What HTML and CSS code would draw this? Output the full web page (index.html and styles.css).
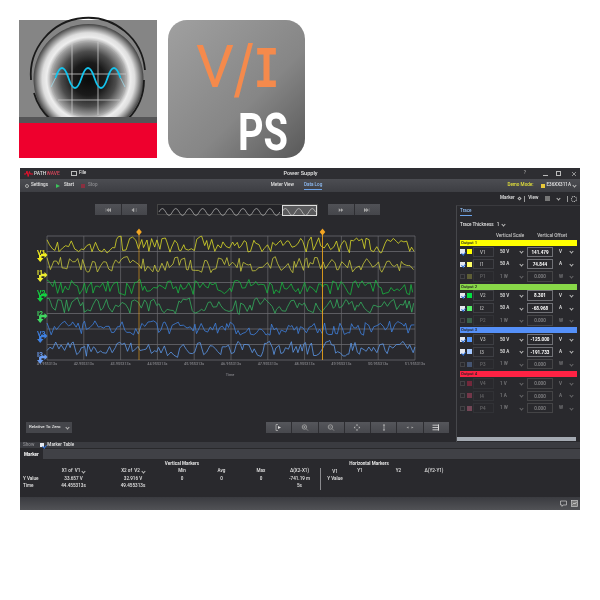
FILE: index.html
```html
<!DOCTYPE html>
<html lang="en">
<head>
    <meta charset="UTF-8">
    <title>PathWave Power Supply</title>
    <link rel="stylesheet" href="styles.css">
</head>
<body>
    <div class="logos">
        <svg class="logo" width="138" height="138" viewBox="19 20 138 138">
            <defs>
                <radialGradient id="lens" gradientUnits="userSpaceOnUse" cx="88.5" cy="79" r="55">
                    <stop offset="0" stop-color="#0a0a0a"/>
                    <stop offset=".3" stop-color="#1a1a1a"/>
                    <stop offset=".5" stop-color="#4c4c4c"/>
                    <stop offset=".66" stop-color="#9a9a9a"/>
                    <stop offset=".76" stop-color="#eeeeee"/>
                    <stop offset=".84" stop-color="#dedede"/>
                    <stop offset=".93" stop-color="#8a8a8a"/>
                    <stop offset="1" stop-color="#444"/>
                </radialGradient>
            </defs>
            <rect x="19" y="20" width="138" height="97" fill="#858585"/>
            <circle cx="88.5" cy="79" r="55" fill="url(#lens)"/>
            <path d="M31 80A57 57 0 0 1 145 70M34 93A57 57 0 0 0 50 119M144 80A56 56 0 0 1 128 119" fill="none" stroke="#1a1a1a" stroke-width="1.8"/>
            <circle cx="88.5" cy="79" r="38" fill="none" stroke="#aaa" stroke-width=".6"/>
            <path d="M72 43V114M98 42V115M52 74H126M58 100H120" stroke="#ccc" stroke-width=".8" fill="none"/>
            <path d="M51 87L55.5 78M120.5 78L125 87" stroke="#9fdcec" stroke-width=".8" fill="none"/>
            <path d="M55.5 78Q62 58 68.5 78T81.5 78T94.5 78T107.5 78T120.5 78" stroke="#14c4ee" stroke-width="1.8" fill="none"/>
            <rect x="19" y="117" width="138" height="6" fill="#555557"/>
            <rect x="19" y="123" width="138" height="35" fill="#ee002d"/>
        </svg>
        <svg class="logo" width="137" height="138" viewBox="168 20 137 138">
            <defs>
                <linearGradient id="tile" x1="0" y1="0" x2="1" y2="1">
                    <stop offset="0" stop-color="#a0a0a0"/>
                    <stop offset=".6" stop-color="#868686"/>
                    <stop offset="1" stop-color="#585858"/>
                </linearGradient>
            </defs>
            <rect x="168" y="20" width="137" height="138" rx="19" fill="url(#tile)"/>
            <text class="logo-vi" x="196" y="87" textLength="38" lengthAdjust="spacingAndGlyphs">V</text>
            <text class="logo-slash" x="234" y="93" textLength="20" lengthAdjust="spacingAndGlyphs">/</text>
            <text class="logo-i" x="254" y="87" textLength="25" lengthAdjust="spacingAndGlyphs">I</text>
            <text class="logo-ps" x="238" y="150" textLength="50" lengthAdjust="spacingAndGlyphs">PS</text>
        </svg>
    </div>

    <div class="app">
        <div class="titlebar">
            <div class="brand">
                <svg width="9" height="7" viewBox="0 0 9 7"><path d="M0 4H2L3 1L4.2 6.5L5.4 1.5L6.2 4H9" fill="none" stroke="#e8102c" stroke-width="1"/></svg>
                <span class="brand-name">PATH<span class="brand-red">WAVE</span></span>
                <span class="folder"></span>
                <span>File</span>
            </div>
            <div class="app-title">Power Supply</div>
            <div class="window-btns">
                <span class="win-help">?</span>
                <span class="win-min"></span>
                <span class="win-max"></span>
                <svg width="6" height="6" viewBox="0 0 6 6"><path d="M1 1L5 5M5 1L1 5" stroke="#bbb" stroke-width=".7"/></svg>
            </div>
        </div>

        <div class="toolbar">
            <div class="actions">
                <span class="gear"></span><span class="act-label">Settings</span>
                <span class="play"></span><span class="act-label">Start</span>
                <span class="stop"></span><span class="act-label dim">Stop</span>
            </div>
            <div class="views">
                <span>Meter View</span>
                <span class="view-on">Data Log</span>
            </div>
            <div class="demo">
                <span class="demo-label">Demo Mode:</span>
                <span class="demo-flag"></span>
                <span>E36XX311A</span>
                <span class="chev"></span>
            </div>
        </div>

        <div class="main">
            <div class="chart-col">
                <div class="nav">
                    <div class="btn-group">
                        <span class="btn"><svg width="6" height="4" viewBox="0 0 8 5"><path d="M1 0V5M5 0L2 2.5L5 5ZM8 0L5 2.5L8 5Z" fill="#aaa" stroke="#aaa" stroke-width=".4"/></svg></span>
                        <span class="btn"><svg width="6" height="4" viewBox="0 0 8 5"><path d="M4 0L1 2.5L4 5ZM7 0V5" fill="#aaa" stroke="#aaa" stroke-width=".6"/></svg></span>
                    </div>
                    <div class="strip">
                        <svg width="126" height="11" viewBox="0 0 126 11"><path d="M1 7q3.4-7 6.8 0t6.8 0t6.8 0t6.8 0t6.8 0t6.8 0t6.8 0t6.8 0t6.8 0t6.8 0t6.8 0t6.8 0t6.8 0t6.8 0t6.8 0t6.8 0t6.8 0t6.8 0" fill="none" stroke="#bdbdbd" stroke-width=".7"/></svg>
                        <svg class="strip-window" width="35" height="11" viewBox="0 0 35 11"><path d="M0 7q3.4-7 6.8 0t6.8 0t6.8 0t6.8 0t6.8 0" fill="none" stroke="#d0d0d0" stroke-width=".7"/></svg>
                    </div>
                    <div class="btn-group">
                        <span class="btn"><svg width="6" height="4" viewBox="0 0 8 5"><path d="M1 0L4 2.5L1 5ZM4 0L7 2.5L4 5Z" fill="#aaa"/></svg></span>
                        <span class="btn"><svg width="6" height="4" viewBox="0 0 8 5"><path d="M0 0L3 2.5L0 5ZM3 0L6 2.5L3 5ZM7 0V5" fill="#aaa" stroke="#aaa" stroke-width=".4"/></svg></span>
                    </div>
                </div>

                <svg id="plot" class="plot" width="436" height="155" viewBox="20 225 436 155"></svg>

                <div class="chart-foot">
                    <div class="zero-select"><span>Relative To Zero</span><span class="chev"></span></div>
                    <div class="zoom-tools">
                        <span class="tool"><svg width="8" height="7" viewBox="0 0 8 7"><path d="M3 .5H1V6.5H3" fill="none" stroke="#bbb" stroke-width=".7"/><path d="M3 2L6 3.5L3 5Z" fill="#ddd"/></svg></span>
                        <span class="tool"><svg width="8" height="7" viewBox="0 0 8 7"><circle cx="3.4" cy="3" r="2.2" fill="none" stroke="#aaa" stroke-width=".8"/><path d="M5 4.6L7 6.6M2.4 3H4.4M3.4 2V4" stroke="#aaa" stroke-width=".7"/></svg></span>
                        <span class="tool"><svg width="8" height="7" viewBox="0 0 8 7"><circle cx="3.4" cy="3" r="2.2" fill="none" stroke="#aaa" stroke-width=".8"/><path d="M5 4.6L7 6.6M2.4 3H4.4" stroke="#aaa" stroke-width=".7"/></svg></span>
                        <span class="tool"><svg width="8" height="7" viewBox="0 0 8 7"><path d="M4 0L5.2 1.4H2.8ZM4 7L5.2 5.6H2.8ZM.8 3.5L2.2 2.3V4.7ZM7.2 3.5L5.8 2.3V4.7Z" fill="#bbb"/></svg></span>
                        <span class="tool"><svg width="8" height="7" viewBox="0 0 8 7"><path d="M4 0L5.2 1.6H2.8ZM4 7L5.2 5.4H2.8Z" fill="#ccc"/><path d="M4 1.5V5.5" stroke="#ccc" stroke-width=".6"/></svg></span>
                        <span class="tool"><svg width="8" height="7" viewBox="0 0 8 7"><path d="M.5 3.5L2.5 2.4V4.6ZM7.5 3.5L5.5 2.4V4.6Z" fill="#aaa"/></svg></span>
                        <span class="tool"><svg width="8" height="7" viewBox="0 0 8 7"><path d="M.5 1.2H6.5V5.8H.5M6.5 .3V6.7M.5 3.5H6.5" fill="none" stroke="#ddd" stroke-width=".8"/></svg></span>
                    </div>
                </div>
            </div>

            <div class="side-col">
                <div class="side-top">
                    <span>Marker</span><span class="diamond"></span><span class="pipe"></span>
                    <span class="side-view">View</span><span class="grid-ico"></span><span class="chev"></span><span class="pipe"></span>
                    <span class="cog"></span>
                </div>
                <div class="panel">
                    <div class="panel-tab">Trace</div>
                    <div class="thick"><span>Trace Thickness</span><span>1</span><span class="chev"></span></div>
                    <div class="heads"><span>Vertical Scale</span><span>Vertical Offset</span></div>

                    <div class="band band1">Output 1</div>
                    <div class="row"><span class="check on"></span><span class="sw sw-v1"></span><span class="name">V1</span><span class="sel">50 V<i class="chev"></i></span><span class="offset">141.479</span><span class="sel">V<i class="chev"></i></span></div>
                    <div class="row"><span class="check on"></span><span class="sw sw-i1"></span><span class="name">I1</span><span class="sel">50 A<i class="chev"></i></span><span class="offset">74.844</span><span class="sel">A<i class="chev"></i></span></div>
                    <div class="row off"><span class="check"></span><span class="sw sw-p1"></span><span class="name">P1</span><span class="sel">1 W<i class="chev"></i></span><span class="offset">0.000</span><span class="sel">W<i class="chev"></i></span></div>

                    <div class="band band2">Output 2</div>
                    <div class="row"><span class="check on"></span><span class="sw sw-v2"></span><span class="name">V2</span><span class="sel">50 V<i class="chev"></i></span><span class="offset">8.301</span><span class="sel">V<i class="chev"></i></span></div>
                    <div class="row"><span class="check on"></span><span class="sw sw-i2"></span><span class="name">I2</span><span class="sel">50 A<i class="chev"></i></span><span class="offset">-68.968</span><span class="sel">A<i class="chev"></i></span></div>
                    <div class="row off"><span class="check"></span><span class="sw sw-p2"></span><span class="name">P2</span><span class="sel">1 W<i class="chev"></i></span><span class="offset">0.000</span><span class="sel">W<i class="chev"></i></span></div>

                    <div class="band band3">Output 3</div>
                    <div class="row"><span class="check on"></span><span class="sw sw-v3"></span><span class="name">V3</span><span class="sel">50 V<i class="chev"></i></span><span class="offset">-125.000</span><span class="sel">V<i class="chev"></i></span></div>
                    <div class="row"><span class="check on"></span><span class="sw sw-i3"></span><span class="name">I3</span><span class="sel">50 A<i class="chev"></i></span><span class="offset">-191.733</span><span class="sel">A<i class="chev"></i></span></div>
                    <div class="row off"><span class="check"></span><span class="sw sw-p3"></span><span class="name">P3</span><span class="sel">1 W<i class="chev"></i></span><span class="offset">0.000</span><span class="sel">W<i class="chev"></i></span></div>

                    <div class="band band4">Output 4</div>
                    <div class="row off"><span class="check"></span><span class="sw sw-v4"></span><span class="name">V4</span><span class="sel">1 V<i class="chev"></i></span><span class="offset">0.000</span><span class="sel">V<i class="chev"></i></span></div>
                    <div class="row off"><span class="check"></span><span class="sw sw-i4"></span><span class="name">I4</span><span class="sel">1 A<i class="chev"></i></span><span class="offset">0.000</span><span class="sel">A<i class="chev"></i></span></div>
                    <div class="row off"><span class="check"></span><span class="sw sw-p4"></span><span class="name">P4</span><span class="sel">1 W<i class="chev"></i></span><span class="offset">0.000</span><span class="sel">W<i class="chev"></i></span></div>

                    <div class="scrollbar"></div>
                </div>
            </div>
        </div>

        <div class="showbar"><span class="dim">Show</span><span class="check on"></span><span>Marker Table</span></div>
        <div class="tabbar"><span class="tab">Marker</span></div>

        <div class="markers">
            <span></span><span></span><span></span>
            <span class="m-head">Vertical Markers</span>
            <span></span><span></span><span></span>
            <span class="m-head m-horz">Horizontal Markers</span>
            <span></span>

            <span></span>
            <span class="m-pick">X1 of&nbsp; V1 <i class="chev"></i></span>
            <span class="m-pick">X2 of&nbsp; V2 <i class="chev"></i></span>
            <span>Min</span><span>Avg</span><span>Max</span><span>Δ(X2-X1)</span>
            <span class="m-sep">V1</span><span>Y1</span><span>Y2</span><span>Δ(Y2-Y1)</span>

            <span class="m-label">Y Value</span>
            <span>33.657 V</span><span>32.916 V</span>
            <span>0</span><span>0</span><span>0</span><span>-741.19 m</span>
            <span class="m-sep">Y Value</span><span></span><span></span><span></span>

            <span class="m-label">Time</span>
            <span>44.455313s</span><span>49.455313s</span>
            <span></span><span></span><span></span><span>5s</span>
            <span class="m-sep"></span><span></span><span></span><span></span>
        </div>

        <div class="statusbar">
            <svg width="7" height="7" viewBox="0 0 7 7"><path d="M.5 1H6.5V5H3L2 6.4V5H.5Z" fill="none" stroke="#ccc" stroke-width=".7"/></svg>
            <svg width="7" height="7" viewBox="0 0 7 7"><rect x=".5" y=".5" width="6" height="6" fill="#777" stroke="#ccc" stroke-width=".7"/><path d="M1.5 4.5L3 3L4 4L5.5 2" fill="none" stroke="#eee" stroke-width=".6"/></svg>
        </div>
    </div>

    <script src="chart.js"></script>
</body>
</html>
```

FILE: styles.css
```css
* {
    margin: 0;
    padding: 0;
    box-sizing: border-box;
}

body {
    font-family: Roboto, "Liberation Sans", sans-serif;
    background-color: white;
    width: 600px;
    height: 600px;
    overflow: hidden;
    padding: 20px 20px 0 19px;
}

.logos {
    display: flex;
    gap: 11px;
    height: 148px;
}

.logo {
    display: block;
    overflow: visible;
    filter: blur(.4px);
}

.logo-vi, .logo-slash, .logo-i {
    fill: #f58a4c;
    font-size: 60px;
}

.logo-vi {
    font-family: Roboto, sans-serif;
}

.logo-slash {
    font-family: Roboto, sans-serif;
    font-size: 70px;
    font-weight: 500;
}

.logo-i {
    font-family: "Liberation Mono", monospace;
    font-weight: 700;
}

.logo-ps {
    fill: white;
    font-family: Roboto, sans-serif;
    font-size: 52px;
    font-weight: 700;
}

/* app window */
.app {
    margin-left: 1px;
    width: 560px;
    height: 342px;
    display: flex;
    flex-direction: column;
    background-color: #29292d;
    color: #e4e4e4;
    font-size: 4.6px;
    font-weight: 500;
    line-height: 1;
    filter: blur(.35px);
}

.chev {
    display: inline-block;
    flex: none;
    width: 3px;
    height: 3px;
    margin-top: -1px;
    border-right: .6px solid #bbb;
    border-bottom: .6px solid #bbb;
    transform: rotate(45deg);
}

.dim {
    color: #8b8b8f;
}

.titlebar {
    height: 11px;
    display: grid;
    grid-template-columns: 1fr auto 1fr;
    align-items: center;
    background-color: #2e2e32;
    padding: 0 3px 0 4px;
}

.brand {
    display: flex;
    align-items: center;
}

.brand-name {
    margin-left: 1px;
    width: 37px;
    font-size: 5px;
    color: #ddd;
}

.brand-red {
    color: #d8455a;
}

.folder {
    width: 6px;
    height: 5px;
    border: .6px solid #bbb;
    margin-right: 2px;
}

.app-title {
    font-size: 5.6px;
}

.window-btns {
    display: flex;
    justify-content: flex-end;
    align-items: center;
    gap: 8px;
    color: #aaa;
}

.win-help {
    margin-right: 9px;
}

.win-min {
    width: 5px;
    height: 1px;
    margin-top: 4px;
    background-color: #bbb;
}

.win-max {
    width: 5px;
    height: 5px;
    border: .7px solid #bbb;
    margin-right: 2px;
}

.toolbar {
    height: 13px;
    display: grid;
    grid-template-columns: 1fr auto 1fr;
    align-items: center;
    background: linear-gradient(#4c4d52, #3d3e43);
    padding: 0 4px 0 5px;
}

.actions {
    display: flex;
    align-items: center;
}

.act-label {
    margin-left: 2px;
    margin-right: 7px;
}

.gear {
    width: 4px;
    height: 4px;
    border: .8px solid #aaa;
    border-radius: 50%;
}

.play {
    width: 0;
    height: 0;
    margin-left: 1px;
    margin-right: 2px;
    border-left: 4px solid #3bc45a;
    border-top: 2.5px solid transparent;
    border-bottom: 2.5px solid transparent;
}

.stop {
    width: 4px;
    height: 4px;
    margin-right: 1px;
    background-color: #8a3040;
}

.views {
    display: flex;
    gap: 10px;
    margin-right: 8px;
}

.view-on {
    color: #8fbdf5;
    padding-bottom: 1.5px;
    border-bottom: .7px solid #6ba3ea;
    margin-bottom: -2px;
}

.demo {
    display: flex;
    justify-content: flex-end;
    align-items: center;
    gap: 2px;
}

.demo-label {
    color: #e4e23a;
    margin-right: 5px;
}

.demo-flag {
    width: 4px;
    height: 4px;
    background-color: #e8c83a;
}

.main {
    height: 250px;
    display: flex;
}

.chart-col {
    width: 436px;
    display: flex;
    flex-direction: column;
    padding-top: 12px;
}

.nav {
    height: 11px;
    display: flex;
    padding-left: 75px;
}

.btn-group {
    width: 52px;
    display: flex;
    gap: 1px;
    background-color: #2e2e32;
}

.btn {
    flex: 1;
    display: flex;
    align-items: center;
    justify-content: center;
    background: linear-gradient(#505156, #45464b);
}

.strip {
    width: 161px;
    margin: 0 10px;
    display: flex;
    background-color: #232327;
    border: .5px solid #444;
}

.strip-window {
    display: block;
    background-color: #5a5a5c;
    outline: .8px solid #ddd;
    outline-offset: -1px;
}

.plot {
    display: block;
    margin-top: 10px;
}

.plot text {
    fill: #85858a;
    font-size: 3.8px;
}

.plot .trace-tag {
    font-size: 7px;
    font-weight: 700;
}

.chart-foot {
    margin-top: 42px;
    height: 11px;
    display: flex;
    justify-content: space-between;
    padding: 0 7px 0 6px;
}

.zero-select {
    width: 46px;
    display: flex;
    align-items: center;
    justify-content: space-between;
    padding: 0 3px;
    background-color: #45464b;
    font-size: 4.4px;
}

.zoom-tools {
    width: 183px;
    display: flex;
    gap: 1px;
    background-color: #2e2e32;
}

.tool {
    flex: 1;
    display: flex;
    align-items: center;
    justify-content: center;
    background: linear-gradient(#55565b, #47484d);
}

/* trace panel */
.side-col {
    width: 124px;
    display: flex;
    flex-direction: column;
}

.side-top {
    height: 13px;
    display: flex;
    align-items: center;
    justify-content: flex-end;
    gap: 3px;
    padding-right: 3px;
}

.side-view {
    margin-left: 1px;
}

.diamond {
    width: 3px;
    height: 3px;
    border: .5px solid #bbb;
    transform: rotate(45deg);
}

.pipe {
    width: .7px;
    height: 6px;
    background-color: #999;
}

.grid-ico {
    width: 5px;
    height: 5px;
    margin: 0 4px;
    background-color: #777;
}

.side-top .chev {
    margin-right: 4px;
}

.cog {
    width: 6px;
    height: 6px;
    border: 1.6px dotted #ddd;
    border-radius: 50%;
}

.panel {
    flex: 1;
    display: flex;
    flex-direction: column;
    border-left: 1px solid #46474b;
    border-top: .5px solid #3a3a3e;
    padding: 3px 3px 0 3px;
}

.panel-tab {
    align-self: flex-start;
    color: #8fbdf5;
    padding-bottom: 1.5px;
    border-bottom: .7px solid #6ba3ea;
}

.thick {
    display: flex;
    align-items: center;
    gap: 3px;
    margin-top: 7px;
}

.heads {
    display: flex;
    margin-top: 6px;
    height: 5px;
    padding-left: 36px;
    gap: 13px;
    color: #c8c8c8;
    white-space: nowrap;
}

.band {
    height: 6px;
    margin-top: 1px;
    padding-left: 1px;
    color: #222;
    font-size: 4.2px;
    line-height: 6px;
    width: 117px;
}

.band1 { background-color: #ffff00; }
.band2 { background-color: #88d848; }
.band3 { background-color: #5590f8; }
.band4 { background-color: #ff2244; }

.row {
    height: 12.3px;
    width: 117px;
    display: grid;
    grid-template-columns: 7px 6px 21px 33px 26px 24px;
    align-items: center;
}

.check {
    width: 5px;
    height: 5px;
    border: .5px solid #666;
    position: relative;
    display: block;
}

.check.on {
    background-color: #e4e8f0;
    border-color: #e4e8f0;
}

.check.on::after {
    content: "";
    position: absolute;
    left: 1.2px;
    top: .2px;
    width: 1.6px;
    height: 3.2px;
    border-right: 1px solid #2d6fd8;
    border-bottom: 1px solid #2d6fd8;
    transform: rotate(40deg);
}

.sw {
    width: 5px;
    height: 5px;
    display: block;
}

.sw-v1 { background-color: #ffff00; }
.sw-i1 { background-color: #ffff66; }
.sw-p1 { background-color: #a8a840; }
.sw-v2 { background-color: #00e040; }
.sw-i2 { background-color: #55ee66; }
.sw-p2 { background-color: #55b070; }
.sw-v3 { background-color: #5599ff; }
.sw-i3 { background-color: #a4c8ff; }
.sw-p3 { background-color: #6a90d0; }
.sw-v4 { background-color: #d82850; }
.sw-i4 { background-color: #d84c70; }
.sw-p4 { background-color: #d87090; }

.name {
    height: 10.5px;
    line-height: 9.5px;
    padding-left: 6px;
    border: .6px solid #3e3f44;
    color: #b8b8b8;
}

.sel {
    height: 10.5px;
    line-height: 9.5px;
    display: flex;
    align-items: center;
    justify-content: space-between;
    padding: 0 4px 0 6px;
}

.sel .chev {
    margin-top: 0;
}

.offset {
    height: 10.5px;
    line-height: 9.5px;
    text-align: center;
    border: .7px solid #707176;
    color: white;
    font-weight: 700;
}

.row.off {
    opacity: .42;
}

.row.off .offset {
    border-color: #6a6a6a;
    font-weight: 500;
}

.scrollbar {
    margin-top: auto;
    margin-left: -3px;
    margin-bottom: 1px;
    width: 119px;
    height: 4px;
    flex: none;
    background-color: #a4aab2;
}

/* marker table */
.showbar {
    height: 6px;
    display: flex;
    align-items: center;
    gap: 3px;
    padding-left: 3px;
    background-color: #3a3b40;
}

.showbar .dim {
    margin-right: 3px;
}

.showbar .check {
    width: 4px;
    height: 4px;
}

.tabbar {
    height: 12px;
    display: flex;
    background-color: #404146;
    border-top: .6px solid #28282b;
    border-bottom: .6px solid #28282b;
}

.tab {
    width: 23px;
    padding-left: 4px;
    line-height: 11px;
    background-color: #29292d;
    font-weight: 700;
    color: white;
}

.markers {
    height: 37px;
    padding-top: 1px;
    display: grid;
    grid-template-columns: 25px 57px 62px 36px 43px 36px 41px 29px 22px 55px 16px;
    grid-auto-rows: 7.2px;
    align-items: center;
    justify-items: center;
    white-space: nowrap;
}

.m-head {
    font-weight: 700;
}

.m-horz {
    grid-column: 8 / span 3;
    margin-right: 8px;
}

.m-pick {
    display: flex;
    align-items: center;
    gap: 2px;
}

.m-label {
    justify-self: start;
    padding-left: 3px;
}

.m-sep {
    justify-self: stretch;
    align-self: stretch;
    text-align: center;
    line-height: 7.2px;
    border-left: .7px solid #8a8a8e;
}

.statusbar {
    flex: 1;
    display: flex;
    align-items: center;
    justify-content: flex-end;
    gap: 4px;
    padding-right: 2px;
    background: linear-gradient(#3a3b40, #515256);
}
```

FILE: chart.js
```js
document.addEventListener('DOMContentLoaded', function() {
    const plot = document.getElementById('plot');
    const NS = 'http://www.w3.org/2000/svg';

    const left = 47;
    const right = 415;
    const top = 236;
    const bottom = 360;

    // small seeded generator so the traces come out the same every time
    let seed = 20211;
    function rnd() {
        seed = (seed * 16807) % 2147483647;
        return seed / 2147483647;
    }

    function add(tag, attrs, text) {
        const el = document.createElementNS(NS, tag);
        for (const key in attrs) el.setAttribute(key, attrs[key]);
        if (text) el.textContent = text;
        plot.appendChild(el);
        return el;
    }

    // grid
    for (let i = 0; i <= 10; i++) {
        const x = left + (right - left) * i / 10;
        add('line', { x1: x, x2: x, y1: top, y2: bottom, stroke: '#626266', 'stroke-width': 0.8 });
        const label = (41 + i) + '.955313s';
        add('text', { x: x, y: 364.5, 'text-anchor': 'middle' }, label);
    }
    for (let i = 0; i <= 8; i++) {
        const y = top + (bottom - top) * i / 8;
        add('line', { x1: left, x2: right, y1: y, y2: y, stroke: '#6a6a6e', 'stroke-width': 0.8 });
    }
    add('text', { x: 230, y: 376, 'text-anchor': 'middle' }, 'Time');

    // traces
    const traces = [
        { mid: 245, amp: 8, color: '#dcdc28', tag: 'V1', tagY: 255, tagColor: '#f2ee20' },
        { mid: 265, amp: 8, color: '#c8c83c', tag: 'I1', tagY: 275, tagColor: '#ecec30' },
        { mid: 287, amp: 8, color: '#18b840', tag: 'V2', tagY: 295, tagColor: '#14d040' },
        { mid: 306, amp: 8, color: '#34b05e', tag: 'I2', tagY: 316, tagColor: '#40d860' },
        { mid: 328, amp: 7, color: '#3f82e0', tag: 'V3', tagY: 336, tagColor: '#3f80e0' },
        { mid: 349, amp: 8, color: '#5c98ea', tag: 'I3', tagY: 357, tagColor: '#6a9cf0' }
    ];

    traces.forEach(function(t) {
        const points = [];
        let x = left;
        let prev = 0;
        while (x < right) {
            // mix in the last value so it isn't a plain zigzag
            const v = 0.95 * (rnd() * 2 - 1) + 0.15 * prev;
            prev = v;
            points.push(x.toFixed(1) + ',' + (t.mid + v * t.amp).toFixed(1));
            x += 1.4 + rnd() * 2.2;
        }
        add('polyline', { points: points.join(' '), fill: 'none', stroke: t.color, 'stroke-width': 0.8 });

        const b = t.tagY;
        add('text', { class: 'trace-tag', x: 37, y: b, style: 'fill:' + t.tagColor }, t.tag);
        const arrows = 'M39 ' + b + 'H41.5V' + (b + 3) + 'H43.5L40.2 ' + (b + 7) + 'L37 ' + (b + 3) + 'H39Z' +
            'M41 ' + (b - 1.2) + 'H44.5V' + (b - 3) + 'L47.5 ' + b + 'L44.5 ' + (b + 3) + 'V' + (b + 1.2) + 'H41Z';
        add('path', { d: arrows, fill: t.tagColor });
    });

    // markers
    [[139, 0.7], [322.5, 1]].forEach(function(m) {
        const x = m[0];
        add('line', { x1: x, x2: x, y1: 232, y2: bottom, stroke: '#e8a11c', 'stroke-width': 0.9, opacity: m[1] });
        add('path', { d: 'M' + x + ' 228.5L' + (x + 2.8) + ' 232L' + x + ' 235.5L' + (x - 2.8) + ' 232Z', fill: '#f5a623' });
    });
});
```
